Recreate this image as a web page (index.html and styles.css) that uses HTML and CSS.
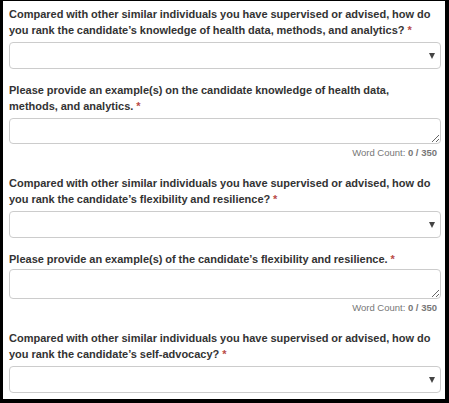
FILE: index.html
```html
<!DOCTYPE html>
<html>
<head>
<meta charset="utf-8">
<link rel="stylesheet" href="styles.css">
</head>
<body>
<div class="page">
  <div class="group">
    <label class="q">Compared with other similar individuals you have supervised or advised, how do you rank the candidate’s knowledge of health data, methods, and analytics? <span class="req">*</span></label>
    <div class="select-wrap"><select class="control"><option></option></select></div>
  </div>
  <div class="group">
    <label class="q">Please provide an example(s) on the candidate knowledge of health data, methods,&nbsp;and analytics. <span class="req">*</span></label>
    <textarea class="control area"></textarea>
    <div class="count">Word Count: <b>0 / 350</b></div>
  </div>
  <div class="group">
    <label class="q">Compared with other similar individuals you have supervised or advised, how do you rank the candidate’s flexibility and resilience? <span class="req">*</span></label>
    <div class="select-wrap"><select class="control"><option></option></select></div>
  </div>
  <div class="group">
    <label class="q q-tight">Please provide an example(s) of the candidate’s flexibility and resilience. <span class="req">*</span></label>
    <textarea class="control area area-tall"></textarea>
    <div class="count">Word Count: <b>0 / 350</b></div>
  </div>
  <div class="group">
    <label class="q">Compared with other similar individuals you have supervised or advised, how do you rank the candidate’s self-advocacy? <span class="req">*</span></label>
    <div class="select-wrap"><select class="control"><option></option></select></div>
  </div>
</div>
</body>
</html>
```

FILE: styles.css
```css
html, body {
  margin: 0;
  padding: 0;
  background: #000;
}
body {
  width: 449px;
  height: 403px;
  overflow: hidden;
}
.page {
  box-sizing: border-box;
  margin: 1px 4px 0 3px;
  height: 398px;
  background: #fff;
  padding: 5px 4px 0 6px;
  font-family: "Liberation Sans", Arial, sans-serif;
  font-size: 11px;
  color: #333;
  overflow: hidden;
}
.group {
  margin-bottom: 13px;
}
.q {
  display: block;
  font-weight: bold;
  line-height: 16px;
  margin-bottom: 4px;
  word-spacing: -0.2px;
}
.q-tight {
  margin-bottom: 2px;
}
.req {
  color: #b94a48;
}
.control {
  display: block;
  box-sizing: border-box;
  width: 432px;
  height: 27px;
  border: 1px solid #ccc;
  border-radius: 4px;
  background: #fff;
  font-family: inherit;
  font-size: 11px;
  margin: 0;
  padding: 4px 8px;
}
select.control {
  appearance: none;
  -webkit-appearance: none;
}
.select-wrap {
  position: relative;
  width: 432px;
}
.select-wrap::after {
  content: "";
  position: absolute;
  right: 6px;
  top: 11px;
  border-left: 3px solid transparent;
  border-right: 3px solid transparent;
  border-top: 6px solid #444;
  pointer-events: none;
}
.area {
  resize: vertical;
  height: 26px;
}
.area-tall {
  height: 30px;
}
.count {
  text-align: right;
  font-size: 9.5px;
  color: #777;
  line-height: 16px;
  margin-right: 4px;
  margin-bottom: -2px;
  padding-top: 1px;
}
.count b {
  font-weight: bold;
}
.group:has(.count) {
  margin-bottom: 16px;
}
```
